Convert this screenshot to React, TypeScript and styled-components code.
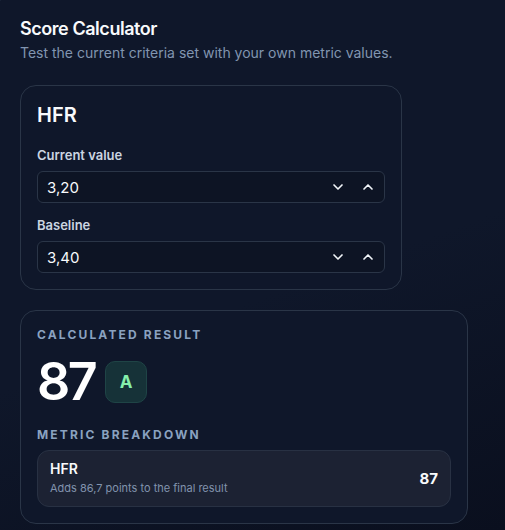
import React, { useState } from 'react';
import styled, { createGlobalStyle } from 'styled-components';
import { ChevronDown, ChevronUp } from 'lucide-react';

const GlobalStyle = createGlobalStyle`
  html, body {
    margin: 0;
    padding: 0;
    height: 100%;
  }
  body {
    background: linear-gradient(160deg, #0f172a 0%, #0f172a 55%, #0a0f1e 100%);
    font-family: Inter, "Noto Sans", sans-serif;
    color: #f8fafc;
    overflow: hidden;
  }
  * {
    box-sizing: border-box;
  }
`;

const Panel = styled.div`
  min-height: 540px;
  margin: -5px 0 0 -5px;
  padding: 19px 20px 20px 24px;
  border-top: 1px solid #1f293b;
  border-left: 1px solid #1f293b;
  border-top-left-radius: 16px;
`;

const Title = styled.h2`
  margin: 0;
  font-size: 18px;
  line-height: 28px;
  font-weight: 600;
  letter-spacing: -0.025em;
  color: #f8fafc;
`;

const Subtitle = styled.p`
  margin: 0;
  font-size: 14px;
  line-height: 20px;
  color: #8195b0;
`;

const Card = styled.section<{ $width: number }>`
  width: ${(p) => p.$width}px;
  border: 1px solid #2a3547;
  border-radius: 16px;
  padding: 16px;
  background: #0f172a;
`;

const InputCard = styled(Card)`
  margin-top: 22px;
`;

const ResultCard = styled(Card)`
  margin-top: 20px;
`;

const MetricName = styled.h3`
  margin: 0 0 19px;
  font-size: 20px;
  line-height: 26px;
  font-weight: 600;
  color: #f8fafc;
`;

const Fields = styled.div`
  display: flex;
  flex-direction: column;
  gap: 14px;
`;

const Field = styled.label`
  display: flex;
  flex-direction: column;
  gap: 8px;
`;

const FieldLabel = styled.span`
  font-size: 13px;
  line-height: 16px;
  font-weight: 600;
  color: #cbd5e1;
`;

const NumberBox = styled.div`
  display: flex;
  align-items: center;
  height: 32px;
  padding: 0 4px 0 9px;
  border: 1px solid #2a3547;
  border-radius: 6px;
  background: #0d1424;
`;

const NumberValue = styled.span`
  flex: 1;
  font-size: 15px;
  color: #f8fafc;
`;

const StepButton = styled.button`
  display: flex;
  align-items: center;
  justify-content: center;
  width: 24px;
  height: 24px;
  margin-left: 6px;
  padding: 0;
  border: none;
  background: transparent;
  color: #f1f5f9;
  cursor: pointer;
`;

const SectionLabel = styled.div<{ $gap?: number }>`
  margin-top: ${(p) => p.$gap ?? 0}px;
  font-size: 12px;
  line-height: 16px;
  font-weight: 700;
  letter-spacing: 0.18em;
  text-transform: uppercase;
  color: #8aa2c0;
`;

const ScoreRow = styled.div`
  display: flex;
  align-items: center;
  gap: 10px;
  margin-top: 13px;
`;

const Score = styled.span`
  font-size: 52px;
  line-height: 52px;
  font-weight: 600;
  color: #ffffff;
  letter-spacing: -0.05em;
`;

const GradeBadge = styled.span`
  display: flex;
  align-items: center;
  justify-content: center;
  width: 42px;
  height: 42px;
  border-radius: 10px;
  background: #163238;
  border: 1px solid #1f4446;
  color: #86efac;
  font-size: 17px;
  font-weight: 700;
`;

const BreakdownItem = styled.div`
  display: flex;
  align-items: center;
  justify-content: space-between;
  margin-top: 7px;
  padding: 9px 12px 10px;
  border: 1px solid #283143;
  border-radius: 12px;
  background: #1c2233;
`;

const ItemText = styled.div`
  display: flex;
  flex-direction: column;
`;

const ItemName = styled.span`
  font-size: 14px;
  line-height: 18px;
  font-weight: 600;
  color: #f8fafc;
`;

const ItemNote = styled.span`
  margin-top: 2px;
  font-size: 11px;
  line-height: 16px;
  color: #8193ad;
`;

const ItemPoints = styled.span`
  font-size: 15px;
  font-weight: 700;
  color: #f8fafc;
`;

interface NumberFieldProps {
  label: string;
  value: number;
  onChange: (v: number) => void;
}

const fmt = (v: number, digits: number) => v.toFixed(digits).replace('.', ',');

function NumberField({ label, value, onChange }: NumberFieldProps) {
  return (
    <Field>
      <FieldLabel>{label}</FieldLabel>
      <NumberBox>
        <NumberValue>{fmt(value, 2)}</NumberValue>
        <StepButton type="button" onClick={() => onChange(value - 0.1)}>
          <ChevronDown size={16} strokeWidth={2.5} />
        </StepButton>
        <StepButton type="button" onClick={() => onChange(value + 0.1)}>
          <ChevronUp size={16} strokeWidth={2.5} />
        </StepButton>
      </NumberBox>
    </Field>
  );
}

export default function App() {
  const [current, setCurrent] = useState(3.2);
  const [baseline, setBaseline] = useState(3.4);

  // fixed result for the shown values
  const points = 86.7;
  const score = Math.round(points);

  return (
    <>
      <GlobalStyle />
      <Panel>
        <Title>Score Calculator</Title>
        <Subtitle>Test the current criteria set with your own metric values.</Subtitle>

        <InputCard $width={382}>
          <MetricName>HFR</MetricName>
          <Fields>
            <NumberField label="Current value" value={current} onChange={setCurrent} />
            <NumberField label="Baseline" value={baseline} onChange={setBaseline} />
          </Fields>
        </InputCard>

        <ResultCard $width={448}>
          <SectionLabel>Calculated result</SectionLabel>
          <ScoreRow>
            <Score>{score}</Score>
            <GradeBadge>A</GradeBadge>
          </ScoreRow>
          <SectionLabel $gap={19}>Metric breakdown</SectionLabel>
          <BreakdownItem>
            <ItemText>
              <ItemName>HFR</ItemName>
              <ItemNote>Adds {fmt(points, 1)} points to the final result</ItemNote>
            </ItemText>
            <ItemPoints>{score}</ItemPoints>
          </BreakdownItem>
        </ResultCard>
      </Panel>
    </>
  );
}
